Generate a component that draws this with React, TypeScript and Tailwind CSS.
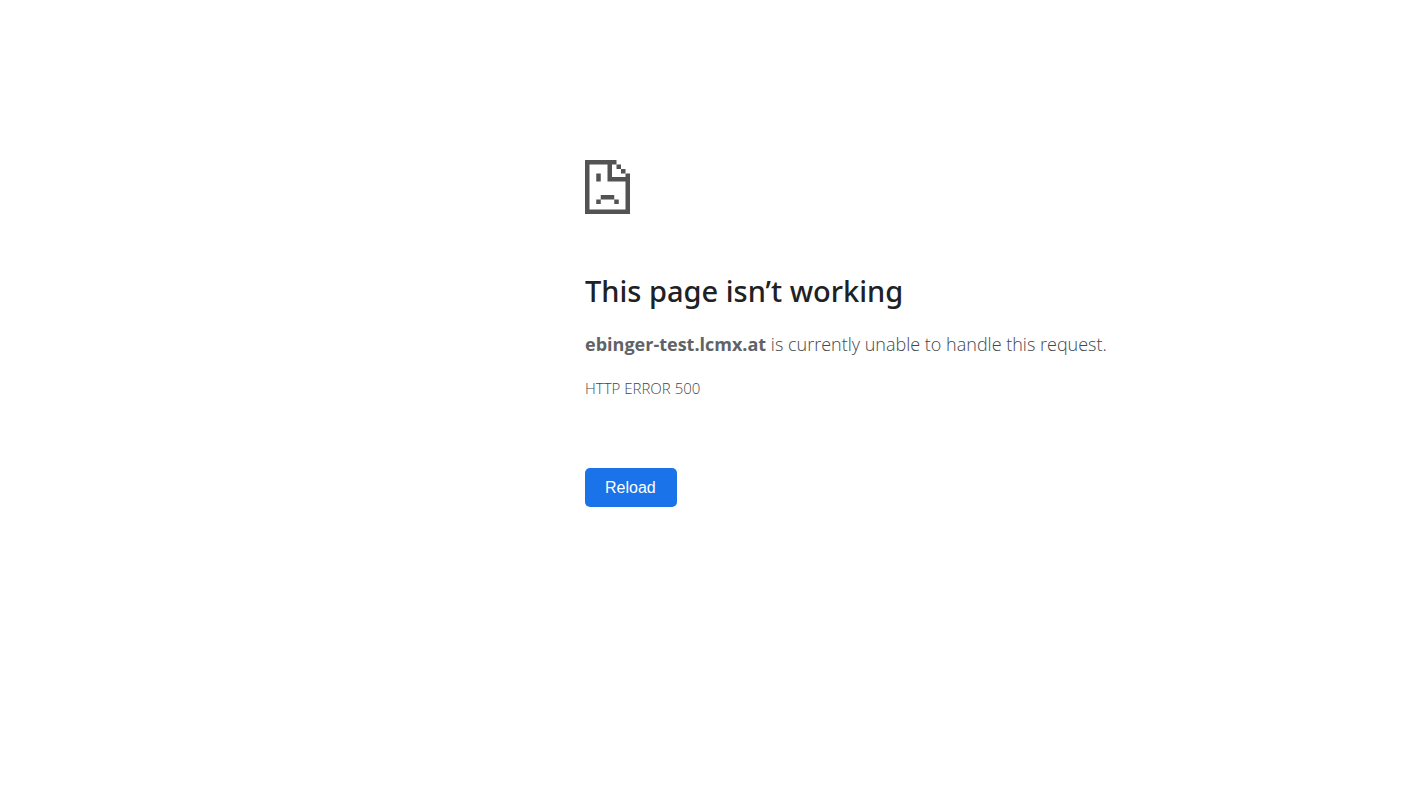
import type { SVGProps } from "react";

function SadPageIcon(props: SVGProps<SVGSVGElement>) {
  return (
    <svg viewBox="0 0 20 24" fill="currentColor" aria-hidden="true" {...props}>
      {/* page outline */}
      <path d="M0 0h14v2H2v20h16V9.5h-8V2h2v5.5h6V6h2v18H0z" />
      {/* folded corner */}
      <path d="M14 2h2v2h-2zM16 4h2v2h-2z" />
      {/* eye and mouth */}
      <path d="M5 6h2v3.5H5zM7 15.5h6v2H7zM5 17.5h2v2H5zM13 17.5h2v2h-2z" />
    </svg>
  );
}

export default function App() {
  return (
    <main className="min-h-screen bg-white pt-40 pl-[41.26%] font-['Open_Sans',sans-serif] text-[#43474b]">
      <SadPageIcon className="h-[54px] w-[45px] text-[#535353]" />

      <h1 className="mt-14 font-['Noto_Sans',sans-serif] text-[29px] leading-[42px] font-medium text-[#202124]">
        This page isn’t working
      </h1>

      <p className="mt-[18px] text-lg leading-7 font-light">
        <strong className="font-bold text-[#5f6368]">ebinger-test.lcmx.at</strong> is currently unable to handle this
        request.
      </p>

      <p className="mt-[18px] text-[15px] leading-6 font-light">HTTP ERROR 500</p>

      <button
        type="button"
        className="mt-[68px] h-[39px] w-[92px] cursor-pointer rounded-[5px] bg-[#1a73e8] px-5 text-left font-['Liberation_Sans',Arial,sans-serif] text-base text-white hover:bg-[#1765cc]"
        onClick={() => window.location.reload()}
      >
        Reload
      </button>
    </main>
  );
}
